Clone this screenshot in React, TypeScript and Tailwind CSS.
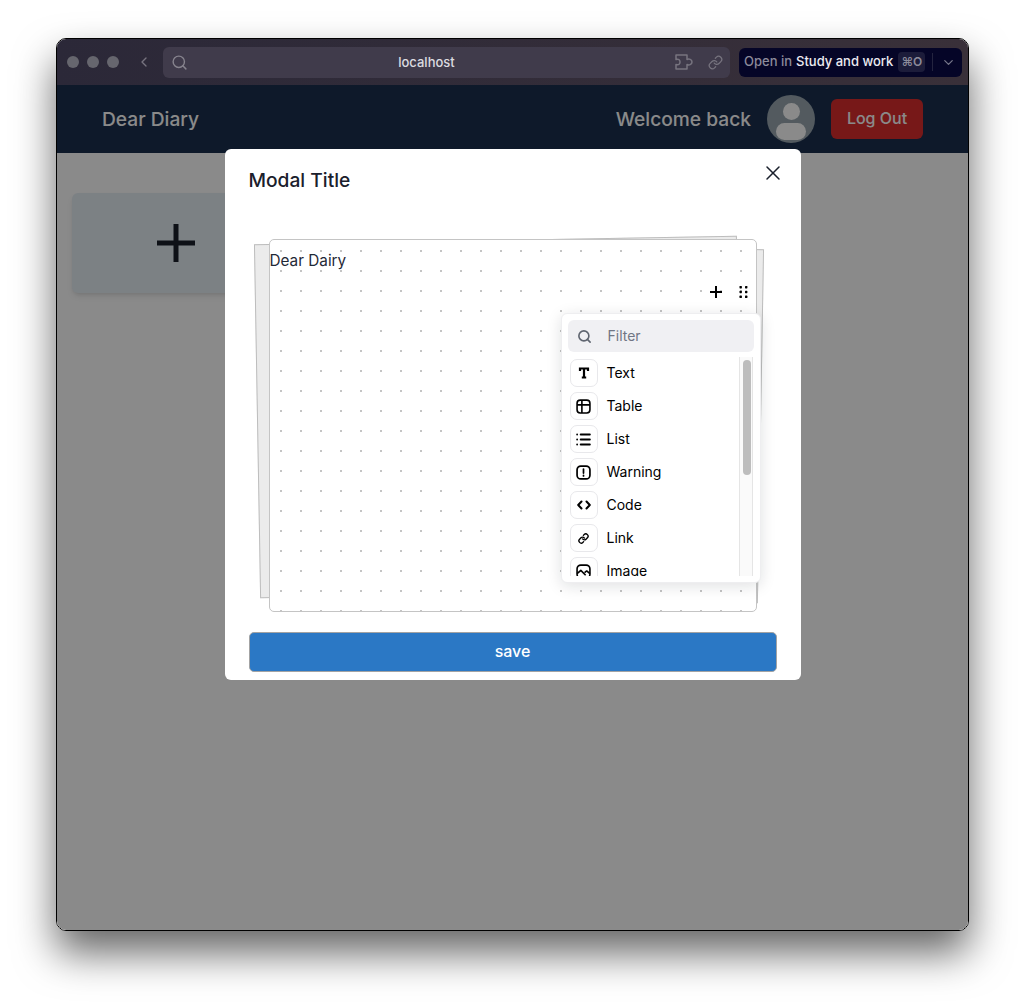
import { ChevronDown, ChevronLeft, Link, List, Search, X } from "lucide-react";

const BLOCKS: { name: string; icon: React.ReactNode }[] = [
  {
    name: "Text",
    icon: (
      <svg viewBox="0 0 14 14" className="w-[14px] h-[14px]" fill="none" stroke="#000" strokeWidth="2.2">
        <path d="M3 5V2.5H11V5M7 2.5V11.5M4.8 11.5H9.2" />
      </svg>
    ),
  },
  {
    name: "Table",
    icon: (
      <svg viewBox="0 0 14 14" className="w-[15px] h-[15px]" fill="none" stroke="#000" strokeWidth="1.5">
        <rect x="1" y="1" width="12" height="12" rx="3" />
        <path d="M1 5.5H13M5.5 1V13" />
      </svg>
    ),
  },
  { name: "List", icon: <List size={17} color="#000" strokeWidth={2.6} /> },
  {
    name: "Warning",
    icon: (
      <svg viewBox="0 0 14 14" className="w-[15px] h-[15px]" fill="none" stroke="#000" strokeWidth="1.6">
        <rect x="1" y="1" width="12" height="12" rx="3.5" />
        <path d="M7 3.8V7.5M7 9.6V10.2" strokeLinecap="round" />
      </svg>
    ),
  },
  {
    name: "Code",
    icon: (
      <svg viewBox="0 0 14 14" className="w-[14px] h-[14px]" fill="none" stroke="#000" strokeWidth="2" strokeLinecap="round" strokeLinejoin="round">
        <path d="M4.5 3.5L1.2 7L4.5 10.5M9.5 3.5L12.8 7L9.5 10.5" />
      </svg>
    ),
  },
  { name: "Link", icon: <Link size={11} color="#000" strokeWidth={3} /> },
  {
    name: "Image",
    icon: (
      <svg viewBox="0 0 14 14" className="w-[15px] h-[15px]" fill="none" stroke="#000" strokeWidth="1.5" strokeLinejoin="round">
        <rect x="1" y="1" width="12" height="12" rx="3.5" />
        <path d="M1 9L4.5 6L9 10.5M8 8L10 6.5L13 9" />
      </svg>
    ),
  },
];

export default function App() {
  return (
    <div className="min-h-[1005px] bg-white pt-[38px] pl-[56px] font-['Inter',sans-serif]">
      <div className="w-[913px] h-[893px] flex flex-col overflow-hidden rounded-[10px] border border-black shadow-[0_22px_40px_rgba(0,0,0,0.6)]">
        <BrowserBar />
        <div className="relative flex-1 bg-white">
          <header className="h-[68px] flex items-center justify-between pl-[45px] pr-[45px] bg-[#1b2f4e]">
            <span className="text-[19.2px] font-medium text-white">Dear Diary</span>
            <div className="flex items-center">
              <span className="text-[19.2px] font-medium text-white">Welcome back</span>
              <div className="ml-4 w-12 h-12 rounded-full bg-[#99a7b0] overflow-hidden flex flex-col items-center pt-[8px]">
                <div className="w-[17px] h-[17px] rounded-full bg-white" />
                <div className="mt-[3px] w-[30px] h-[17px] rounded-[9px] bg-white" />
              </div>
              <button className="ml-4 w-[92px] h-10 rounded-md bg-[#dc2e2e] pb-[2px] text-base font-medium text-white">Log Out</button>
            </div>
          </header>
          <div className="pl-[15px] pt-10">
            <div className="w-[208px] h-[100px] rounded-md bg-[#e6eef4] shadow-md flex items-center justify-center">
              <svg viewBox="0 0 38 38" className="w-[38px] h-[38px]" stroke="#1a202c" strokeWidth="5">
                <path d="M19 0V38M0 19H38" />
              </svg>
            </div>
          </div>
          <div className="absolute inset-0 bg-black/[0.46] flex justify-center items-start pt-16">
            <Modal />
          </div>
        </div>
      </div>
    </div>
  );
}

function BrowserBar() {
  return (
    <div className="h-[46px] shrink-0 flex items-center bg-gradient-to-r from-[#2b2838] to-[#393039] pl-[10px] pr-[6px]">
      <div className="flex gap-2">
        <span className="w-3 h-3 rounded-full bg-[#66666e]" />
        <span className="w-3 h-3 rounded-full bg-[#66666e]" />
        <span className="w-3 h-3 rounded-full bg-[#66666e]" />
      </div>
      <ChevronLeft size={16} color="#77747f" className="ml-[17px]" />
      <div className="ml-[11px] w-[567px] h-[31px] rounded-md bg-[#403b4b] flex items-center pl-2 pr-[7px]">
        <Search size={17} color="#86838d" />
        <span className="flex-1 pt-px pr-[9px] text-center text-[13px] font-medium text-[#dcdbe0]">localhost</span>
        <svg viewBox="0 0 20 20" className="w-5 h-5" fill="none" stroke="#77747f" strokeWidth="1.5" strokeLinejoin="round">
          <path d="M2 3H13V7.5C15 6.5 18 7.5 18 10S15 13.5 13 12.5V17H2V12.5C5 13.5 6 11.5 6 10S5 6.5 2 7.5Z" />
        </svg>
        <Link size={15} color="#77747f" className="ml-[14px]" />
      </div>
      <div className="ml-[9px] w-[223px] h-[29px] rounded-md bg-[#050527] flex items-center pl-[5px] text-[13px] font-medium whitespace-nowrap">
        <span className="text-[#8c8b9b]">Open in</span>
        <span className="ml-1 text-[#ecebf2]">Study and work</span>
        <span className="ml-[5px] px-[3px] h-5 rounded bg-[#1c1c3a] flex items-center text-xs font-semibold text-[#8c8b9b]">⌘O</span>
        <span className="ml-[7px] w-px h-[18px] bg-[#24243f]" />
        <ChevronDown size={15} color="#77778a" className="ml-2" />
      </div>
    </div>
  );
}

function Modal() {
  return (
    <div className="w-[576px] rounded-md bg-white px-6 pt-[17px] pb-2">
      <div className="relative">
        <h2 className="text-[19.2px] leading-7 font-medium text-[#1a202c]">Modal Title</h2>
        <X size={24} color="#1a202c" strokeWidth={1.5} className="absolute right-[-8px] top-[-5px]" />
      </div>
      <div className="relative mt-[45px] mx-5 h-[373px]">
        <div className="absolute left-[-12px] top-[1px] w-[483px] h-[354px] -rotate-1 border border-[#bdbdbd] bg-[#ebebeb]" />
        <div className="absolute right-[-4px] top-[6px] w-[483px] h-[354px] rotate-1 border border-[#bdbdbd] bg-[#ebebeb]" />
        <div className="relative h-full rounded-[5px] border border-[#c4c4c4] bg-white bg-[radial-gradient(circle,#c4c4c4_1px,transparent_1.2px)] bg-[size:20px_20px] bg-[position:1px_1px]">
          <p className="pt-[9px] text-[15.3px] leading-6 text-[#1f2937]">Dear Dairy</p>
          <svg viewBox="0 0 12 12" className="absolute left-[440px] top-[46px] w-3 h-3" stroke="#000" strokeWidth="2">
            <path d="M6 0V12M0 6H12" />
          </svg>
          <svg viewBox="0 0 10 12" className="absolute left-[469px] top-[46px] w-[10px] h-3" fill="#000">
            <rect x="0.5" y="0" width="2.4" height="2.4" rx="0.6" />
            <rect x="6" y="0" width="2.4" height="2.4" rx="0.6" />
            <rect x="0.5" y="4.8" width="2.4" height="2.4" rx="0.6" />
            <rect x="6" y="4.8" width="2.4" height="2.4" rx="0.6" />
            <rect x="0.5" y="9.6" width="2.4" height="2.4" rx="0.6" />
            <rect x="6" y="9.6" width="2.4" height="2.4" rx="0.6" />
          </svg>
          <Popover />
        </div>
      </div>
      <button className="mt-5 w-full h-10 rounded-[5px] border border-[#a3a3a3] bg-[#2b78c5] pb-[2px] text-base font-medium text-white">save</button>
    </div>
  );
}

function Popover() {
  return (
    <div className="absolute left-[291px] top-[73px] w-[200px] h-[270px] rounded-md border border-[#eeeef0] bg-white p-[6px] shadow-[0_3px_15px_rgba(13,20,33,0.13)]">
      <div className="w-[186px] h-8 rounded-md bg-[#f0f0f3] flex items-center pl-[9px]">
        <Search size={15} color="#5f6570" strokeWidth={2.6} />
        <span className="ml-4 text-sm text-[#707684]">Filter</span>
      </div>
      <div className="mt-[5px] h-[219px] flex overflow-hidden">
        <div className="w-[171px] flex flex-col gap-[5px] pl-[2px] pt-[2px]">
          {BLOCKS.map((b) => (
            <div key={b.name} className="flex items-center shrink-0">
              <span className="w-[28px] h-[28px] rounded-[7px] border border-[#e8e8eb] bg-white flex items-center justify-center">{b.icon}</span>
              <span className="ml-[9px] text-sm font-normal text-black">{b.name}</span>
            </div>
          ))}
        </div>
        <div className="w-[14px] h-full border-x border-[#e5e5e5] bg-[#fafafa] px-[3px] pt-[3px]">
          <div className="w-2 h-[115px] rounded bg-[#bdbdbd]" />
        </div>
      </div>
    </div>
  );
}
